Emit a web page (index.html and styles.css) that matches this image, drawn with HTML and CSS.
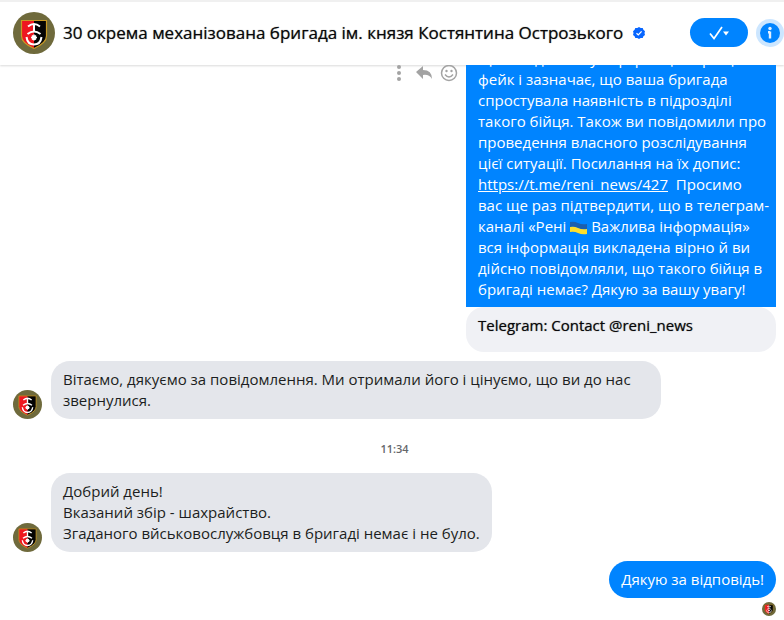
FILE: index.html
```
<!DOCTYPE html>
<html lang="uk">
<head>
<meta charset="utf-8">
<meta name="viewport" content="width=device-width, initial-scale=1">
<title>30 окрема механізована бригада</title>
<link rel="stylesheet" href="styles.css">
</head>
<body>
<svg class="sprite" aria-hidden="true">
  <symbol id="crest" viewBox="0 0 42 42">
    <circle cx="21" cy="21" r="21" fill="#6f6a3c"/>
    <path d="M8.500 8.500h25v15.500q0 7-12.500 12.500Q8.500 31 8.500 24z" fill="#050404"/>
    <path d="M8.500 8.500H21v28Q8.500 31 8.500 24z" fill="#ee1720"/>
    <path d="M8.500 8.500h25v15.500q0 7-12.500 12.500Q8.500 31 8.500 24z" fill="none" stroke="#c99a25" stroke-width="1.200"/>
    <g fill="none" stroke="#fff" stroke-width="2">
      <path d="M15 14.500q6-5 12 0M21 12.500v7"/>
      <path d="M14.500 22q6.500-5 13 0M13.500 25q1 7.500 7.500 7.500t7.500-7.500"/>
    </g>
    <path d="M21 22.500v6M18 25.500h6M19 23.500l4 4M23 23.500l-4 4" stroke="#fff" stroke-width="1.500"/>
  </symbol>
</svg>
<header class="topbar">
  <svg class="avatar avatar-large" role="img" aria-label="Емблема бригади"><use href="#crest"/></svg>
  <h1 class="title">30 окрема механізована бригада ім. князя Костянтина Острозького</h1>
  <svg class="verified" viewBox="0 0 12 12" aria-hidden="true">
    <path d="M6 0l1.700 1 2-.1.700 1.900L12 4.200 11.500 6l.5 1.900-1.600 1.300-.7 1.900-2-.1L6 12l-1.700-1-2 .1-.7-1.900L0 7.900.5 6 0 4.200l1.600-1.400.7-1.900 2 .1z" fill="#0866ff"/>
    <path d="M3.500 6.200l1.800 1.700 3.300-3.500" fill="none" stroke="#fff" stroke-width="1.300"/>
  </svg>
  <div class="actions">
    <button class="done" type="button" aria-label="Позначити виконаним">
      <svg viewBox="0 0 22 16" aria-hidden="true">
        <path d="M2 8.500l4 5L14 2" fill="none" stroke="#fff" stroke-width="1.700"/>
        <path d="M15 6.500h6l-3 4z" fill="#fff"/>
      </svg>
    </button>
    <button class="info" type="button" aria-label="Інформація">
      <svg viewBox="0 0 20 20" aria-hidden="true">
        <circle cx="10" cy="5.500" r="1.700" fill="#e4f1ff"/>
        <path d="M10 8.500v7M8 9.200h2" fill="none" stroke="#e4f1ff" stroke-width="2.400"/>
      </svg>
    </button>
  </div>
</header>
<main class="thread">
  <section class="outgoing">
    <div class="tools">
      <button type="button" aria-label="Більше">
        <svg viewBox="0 0 18 18"><g fill="#a3a3a3"><circle cx="9" cy="3" r="2"/><circle cx="9" cy="9" r="2"/><circle cx="9" cy="15" r="2"/></g></svg>
      </button>
      <button type="button" aria-label="Відповісти">
        <svg viewBox="0 0 18 18"><path d="M1 8l7-6v4q9 0 9 9-3-5-9-4v4z" fill="#a3a3a3"/></svg>
      </button>
      <button type="button" aria-label="Реакція">
        <svg viewBox="0 0 18 18"><g fill="none" stroke="#a3a3a3" stroke-width="1.500"><circle cx="9" cy="9" r="7.500"/><path d="M5 10.500q4 5 8 0"/></g><g fill="#a3a3a3"><circle cx="6.500" cy="7" r="1.200"/><circle cx="11.500" cy="7" r="1.200"/></g></svg>
      </button>
    </div>
    <div class="column">
      <p class="bubble sent long">що повідомлену інформацію про це<br>фейк і зазначає, що ваша бригада<br>спростувала наявність в підрозділі<br>такого бійця. Також ви повідомили про<br>проведення власного розслідування<br>цієї ситуації. Посилання на їх допис:<br><a href="https://t.me/reni_news/427">https://t.me/reni_news/427</a>&nbsp; Просимо<br>вас ще раз підтвердити, що в телеграм-<br>каналі «Рені <svg class="flag" viewBox="0 0 17 14" role="img" aria-label="Прапор України"><path d="M0 1q4-1 8 1t9 1v5q-5 1-9-1T0 6z" fill="#1c5fae"/><path d="M0 6q4-1 8 1t9 1v5q-5 1-9-1T0 11z" fill="#ffdf2b"/></svg> Важлива інформація»<br>вся інформація викладена вірно й ви<br>дійсно повідомляли, що такого бійця в<br>бригаді немає? Дякую за вашу увагу!</p>
      <div class="preview">Telegram: Contact @reni_news</div>
    </div>
  </section>
  <section class="incoming">
    <svg class="avatar" aria-hidden="true"><use href="#crest"/></svg>
    <p class="bubble received wide">Вітаємо, дякуємо за повідомлення. Ми отримали його і цінуємо, що ви до нас<br>звернулися.</p>
  </section>
  <time class="time">11:34</time>
  <section class="incoming">
    <svg class="avatar" aria-hidden="true"><use href="#crest"/></svg>
    <p class="bubble received">Добрий день!<br>Вказаний збір - шахрайство.<br>Згаданого вйськовослужбовця в бригаді немає і не було.</p>
  </section>
  <p class="bubble sent reply">Дякую за відповідь!</p>
  <svg class="avatar seen" role="img" aria-label="Переглянуто"><use href="#crest"/></svg>
</main>
</body>
</html>
```
FILE: styles.css
```
* { box-sizing: border-box; }
body {
  margin: 0;
  height: 100vh;
  display: flex;
  flex-direction: column;
  background: #fff;
  color: #1c1e21;
  font-family: "Open Sans", "Noto Sans", sans-serif;
  font-size: 15px;
  line-height: 21px;
}
.sprite { position: absolute; width: 0; height: 0; }
p, h1 { margin: 0; }
button { border: 0; padding: 0; background: none; }
svg { display: block; flex: none; }
.topbar {
  flex: none;
  display: flex;
  align-items: center;
  height: 65px;
  padding: 0 4px 2px 13px;
  border-top: 2px solid #f0f0f0;
  box-shadow: 0 1px 2px rgba(0, 0, 0, 0.15);
}
.title {
  margin-left: 8px;
  font-size: 17px;
  font-weight: 500;
  line-height: 24px;
  white-space: nowrap;
  color: #080809;
  text-shadow: 0 0 1px rgba(8, 8, 9, 0.6);
}
.verified { width: 12px; height: 12px; margin-left: 10px; }
.actions { display: flex; align-items: center; gap: 12px; margin-left: auto; }
.done {
  display: flex;
  align-items: center;
  justify-content: center;
  width: 58px;
  height: 29px;
  border-radius: 15px;
  background: #0084ff;
}
.done svg { width: 22px; height: 16px; }
.info {
  width: 20px;
  height: 20px;
  border-radius: 50%;
  background: #0084ff;
  box-shadow: 0 0 0 4px #cce6ff;
}
.avatar { width: 29px; height: 29px; }
.avatar-large { width: 42px; height: 42px; }
.thread {
  flex: 1;
  min-height: 0;
  display: flex;
  flex-direction: column;
  justify-content: flex-end;
  overflow: hidden;
  padding: 0 8px 4px 13px;
}
.thread > * { flex: none; }
.outgoing { display: flex; justify-content: flex-end; gap: 8px; }
.tools {
  display: flex;
  align-self: flex-start;
  gap: 7px;
  padding-top: 24px;
}
.tools svg { width: 18px; height: 18px; }
.column { width: 310px; }
.bubble { padding: 8px 12px; white-space: nowrap; }
.sent { background: #0084ff; color: #fff; }
.sent a { color: inherit; }
.long { padding-bottom: 7px; }
.flag { display: inline-block; width: 17px; height: 14px; vertical-align: -3px; }
.preview {
  height: 45px;
  padding: 8px 12px;
  border-radius: 18px;
  background: #f0f1f5;
  color: #080809;
  font-weight: 500;
  text-shadow: 0 0 1px rgba(8, 8, 9, 0.6);
}
.incoming { display: flex; align-items: flex-end; gap: 9px; margin-top: 9px; }
.received { border-radius: 19px; background: #e4e6eb; }
.wide { width: 80%; }
.time {
  align-self: center;
  margin: 19px 0 5px;
  font-size: 11px;
  font-weight: 600;
  color: #65676b;
}
.reply { align-self: flex-end; margin-top: 9px; border-radius: 19px; }
.seen { width: 14px; height: 14px; align-self: flex-end; margin-top: 4px; }
```
